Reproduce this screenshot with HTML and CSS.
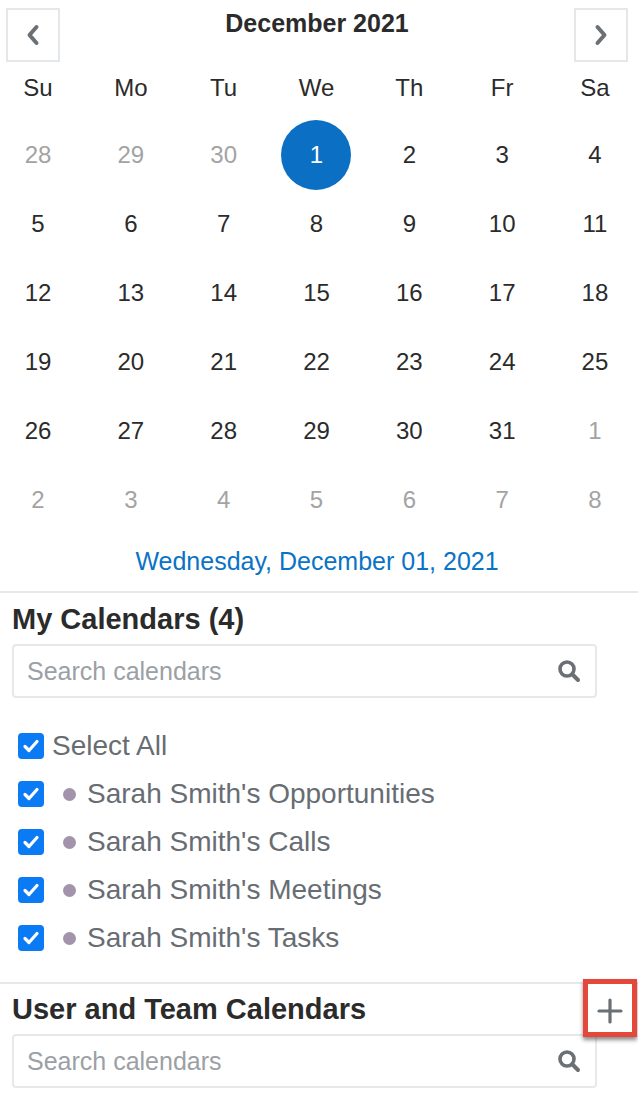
FILE: index.html
```html
<!DOCTYPE html>
<html>
<head>
<meta charset="utf-8">
<link rel="stylesheet" href="styles.css">
</head>
<body>
<div class="page">
  <div class="cal">
    <div class="nav">
      <button class="navbtn" aria-label="Previous">
        <svg width="14" height="22" viewBox="0 0 14 22"><polyline points="10.5,3 3.5,11 10.5,19" fill="none" stroke="#6b7075" stroke-width="4" stroke-linecap="round" stroke-linejoin="round"/></svg>
      </button>
      <div class="title">December 2021</div>
      <button class="navbtn" aria-label="Next">
        <svg width="14" height="22" viewBox="0 0 14 22"><polyline points="3.5,3 10.5,11 3.5,19" fill="none" stroke="#6b7075" stroke-width="4" stroke-linecap="round" stroke-linejoin="round"/></svg>
      </button>
    </div>
    <div class="grid weekdays">
      <div>Su</div><div>Mo</div><div>Tu</div><div>We</div><div>Th</div><div>Fr</div><div>Sa</div>
    </div>
    <div class="grid days">
      <div class="muted">28</div><div class="muted">29</div><div class="muted">30</div><div><span class="sel">1</span></div><div>2</div><div>3</div><div>4</div>
      <div>5</div><div>6</div><div>7</div><div>8</div><div>9</div><div>10</div><div>11</div>
      <div>12</div><div>13</div><div>14</div><div>15</div><div>16</div><div>17</div><div>18</div>
      <div>19</div><div>20</div><div>21</div><div>22</div><div>23</div><div>24</div><div>25</div>
      <div>26</div><div>27</div><div>28</div><div>29</div><div>30</div><div>31</div><div class="muted">1</div>
      <div class="muted">2</div><div class="muted">3</div><div class="muted">4</div><div class="muted">5</div><div class="muted">6</div><div class="muted">7</div><div class="muted">8</div>
    </div>
    <div class="datelabel">Wednesday, December 01, 2021</div>
  </div>

  <div class="section">
    <h2 class="heading mycal">My Calendars (4)</h2>
    <div class="search">
      <span class="ph">Search calendars</span>
      <svg class="sicon" width="24" height="24" viewBox="0 0 24 24"><circle cx="10" cy="10" r="7" fill="none" stroke="#6b7075" stroke-width="3.6"/><line x1="15.5" y1="15.5" x2="21" y2="21" stroke="#6b7075" stroke-width="4" stroke-linecap="round"/></svg>
    </div>
    <ul class="list">
      <li class="row all"><span class="cb"><svg width="18" height="16" viewBox="0 0 18 16"><polyline points="3,8.5 7,12.5 15,3.5" fill="none" stroke="#fff" stroke-width="3.2" stroke-linecap="round" stroke-linejoin="round"/></svg></span><span class="lbl">Select All</span></li>
      <li class="row"><span class="cb"><svg width="18" height="16" viewBox="0 0 18 16"><polyline points="3,8.5 7,12.5 15,3.5" fill="none" stroke="#fff" stroke-width="3.2" stroke-linecap="round" stroke-linejoin="round"/></svg></span><span class="dot"></span><span class="lbl">Sarah Smith's Opportunities</span></li>
      <li class="row"><span class="cb"><svg width="18" height="16" viewBox="0 0 18 16"><polyline points="3,8.5 7,12.5 15,3.5" fill="none" stroke="#fff" stroke-width="3.2" stroke-linecap="round" stroke-linejoin="round"/></svg></span><span class="dot"></span><span class="lbl">Sarah Smith's Calls</span></li>
      <li class="row"><span class="cb"><svg width="18" height="16" viewBox="0 0 18 16"><polyline points="3,8.5 7,12.5 15,3.5" fill="none" stroke="#fff" stroke-width="3.2" stroke-linecap="round" stroke-linejoin="round"/></svg></span><span class="dot"></span><span class="lbl">Sarah Smith's Meetings</span></li>
      <li class="row"><span class="cb"><svg width="18" height="16" viewBox="0 0 18 16"><polyline points="3,8.5 7,12.5 15,3.5" fill="none" stroke="#fff" stroke-width="3.2" stroke-linecap="round" stroke-linejoin="round"/></svg></span><span class="dot"></span><span class="lbl">Sarah Smith's Tasks</span></li>
    </ul>
  </div>

  <div class="section second">
    <div class="headrow">
      <h2 class="heading">User and Team Calendars</h2>
      <button class="plus" aria-label="Add">
        <svg width="26" height="26" viewBox="0 0 26 26"><line x1="13" y1="2" x2="13" y2="24" stroke="#6b7075" stroke-width="3.2" stroke-linecap="round"/><line x1="2" y1="13" x2="24" y2="13" stroke="#6b7075" stroke-width="3.2" stroke-linecap="round"/></svg>
      </button>
      <div class="highlight"></div>
    </div>
    <div class="search">
      <span class="ph">Search calendars</span>
      <svg class="sicon" width="24" height="24" viewBox="0 0 24 24"><circle cx="10" cy="10" r="7" fill="none" stroke="#6b7075" stroke-width="3.6"/><line x1="15.5" y1="15.5" x2="21" y2="21" stroke="#6b7075" stroke-width="4" stroke-linecap="round"/></svg>
    </div>
  </div>
</div>
</body>
</html>
```

FILE: styles.css
```css
* { box-sizing: border-box; }
html, body { margin: 0; padding: 0; background: #fff; }
body {
  font-family: "Liberation Sans", Arial, Helvetica, sans-serif;
  color: #2b2b2b;
  width: 638px;
  overflow: hidden;
}
.page { width: 638px; }

.nav {
  display: flex;
  justify-content: space-between;
  align-items: flex-start;
  padding: 8px 10px 0 6px;
  height: 62px;
}
.navbtn {
  width: 54px;
  height: 54px;
  border: 2px solid #e4e8eb;
  background: #fff;
  padding: 0;
  display: flex;
  align-items: center;
  justify-content: center;
}
.title {
  font-size: 25px;
  font-weight: bold;
  line-height: 30px;
  color: #2b2b2b;
}

.grid {
  display: grid;
  grid-template-columns: repeat(7, 70px);
  justify-content: space-between;
  padding: 0 8px 0 3px;
  font-size: 24px;
  text-align: center;
}
.weekdays > div {
  height: 52px;
  line-height: 52px;
}
.weekdays { margin-bottom: 6px; }
.days > div {
  height: 69px;
  display: flex;
  align-items: center;
  justify-content: center;
}
.days .muted { color: #a3a3a3; }
.sel {
  width: 70px;
  height: 70px;
  flex: none;
  border-radius: 50%;
  background: #0b6fc4;
  color: #fff;
  display: flex;
  align-items: center;
  justify-content: center;
}
.datelabel {
  margin-top: 12px;
  line-height: 30px;
  padding-bottom: 15px;
  text-align: center;
  color: #0a73c6;
  font-size: 25px;
  padding-right: 4px;
  border-bottom: 2px solid #e6e9ec;
}

.section { padding: 0 12px; }
.heading {
  margin: 0;
  font-size: 29px;
  line-height: 32px;
  font-weight: bold;
  color: #2b2b2b;
}
.mycal { padding-top: 10px; }
.search {
  margin-top: 9px;
  width: 585px;
  height: 54px;
  border: 2px solid #e6e9ec;
  border-radius: 4px;
  display: flex;
  align-items: center;
  justify-content: space-between;
  padding: 0 14px 0 13px;
}
.ph {
  font-size: 25px;
  color: #9ba0a5;
}
.sicon { flex: none; }

.list {
  list-style: none;
  margin: 24px 0 0;
  padding: 0 0 0 6px;
}
.row {
  height: 48px;
  display: flex;
  align-items: center;
}
.cb {
  width: 26px;
  height: 26px;
  border-radius: 4px;
  background: #0a7bf4;
  display: flex;
  align-items: center;
  justify-content: center;
  flex: none;
}
.dot {
  width: 13px;
  height: 13px;
  border-radius: 50%;
  background: #a194ab;
  margin-left: 19px;
  margin-right: 11px;
  flex: none;
}
.lbl {
  font-size: 28px;
  color: #676d72;
}
.all .lbl { margin-left: 8px; }

.second {
  margin-top: 20px;
  border-top: 2px solid #e6e9ec;
}
.headrow {
  position: relative;
  height: 50px;
  display: flex;
  align-items: center;
  justify-content: space-between;
}
.plus {
  width: 32px;
  height: 32px;
  border: 0;
  background: transparent;
  padding: 0;
  margin-top: 4px;
  display: flex;
  align-items: center;
  justify-content: center;
}
.highlight {
  position: absolute;
  right: -11px;
  top: -5px;
  width: 54px;
  height: 58px;
  border: 5px solid #e4483a;
  box-shadow: 0 3px 4px rgba(0,0,0,0.45);
  pointer-events: none;
}
.second .search { margin-top: 0; }
```
